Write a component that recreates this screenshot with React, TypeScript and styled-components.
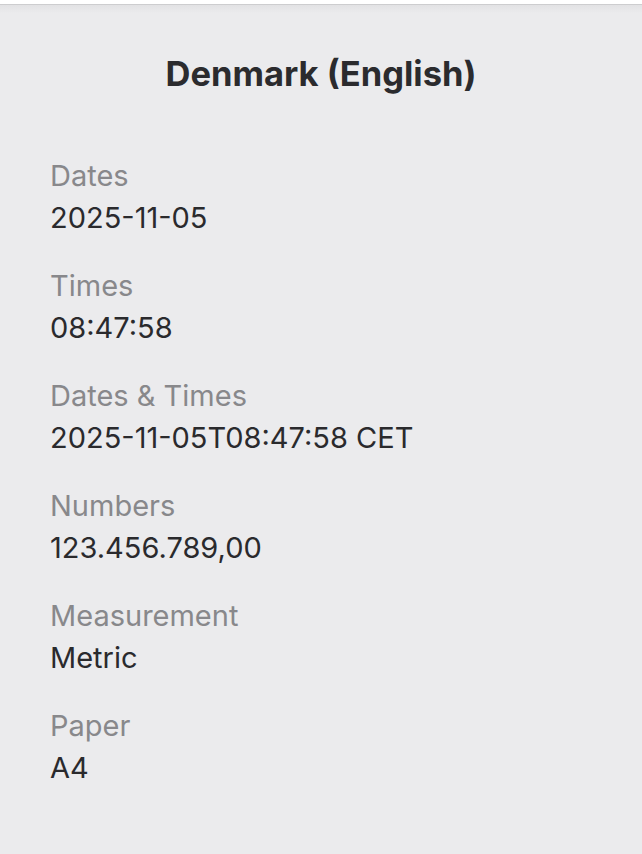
import styled, { createGlobalStyle } from 'styled-components';

const GlobalStyle = createGlobalStyle`
  html, body {
    margin: 0;
    padding: 0;
    background: #ffffff;
  }
  body {
    font-family: Inter, "Noto Sans", sans-serif;
  }
`;

const Panel = styled.div`
  margin-top: 4px;
  min-height: 850px;
  box-sizing: border-box;
  background: linear-gradient(#e2e2e4 0px, #ebebed 8px);
  border-top: 1px solid #cdcdcf;
  padding: 49px 50px 40px;
`;

const Title = styled.h1`
  margin: 0 0 61px;
  text-align: center;
  font-size: 34.5px;
  line-height: 40px;
  font-weight: 700;
  color: #2b2b2e;
`;

const List = styled.dl`
  margin: 0;
  display: flex;
  flex-direction: column;
  gap: 26px;
`;

const Item = styled.div`
  display: flex;
  flex-direction: column;
`;

const Label = styled.dt`
  font-size: 29px;
  line-height: 42px;
  color: #88888b;
`;

const Value = styled.dd`
  margin: 0;
  font-size: 29px;
  line-height: 42px;
  color: #2a2a2d;
`;

const rows = [
  { label: 'Dates', value: '2025-11-05' },
  { label: 'Times', value: '08:47:58' },
  { label: 'Dates & Times', value: '2025-11-05T08:47:58 CET' },
  { label: 'Numbers', value: '123.456.789,00' },
  { label: 'Measurement', value: 'Metric' },
  { label: 'Paper', value: 'A4' },
];

export default function App() {
  return (
    <>
      <GlobalStyle />
      <Panel>
        <Title>Denmark (English)</Title>
        <List>
          {rows.map((row) => (
            <Item key={row.label}>
              <Label>{row.label}</Label>
              <Value>{row.value}</Value>
            </Item>
          ))}
        </List>
      </Panel>
    </>
  );
}
